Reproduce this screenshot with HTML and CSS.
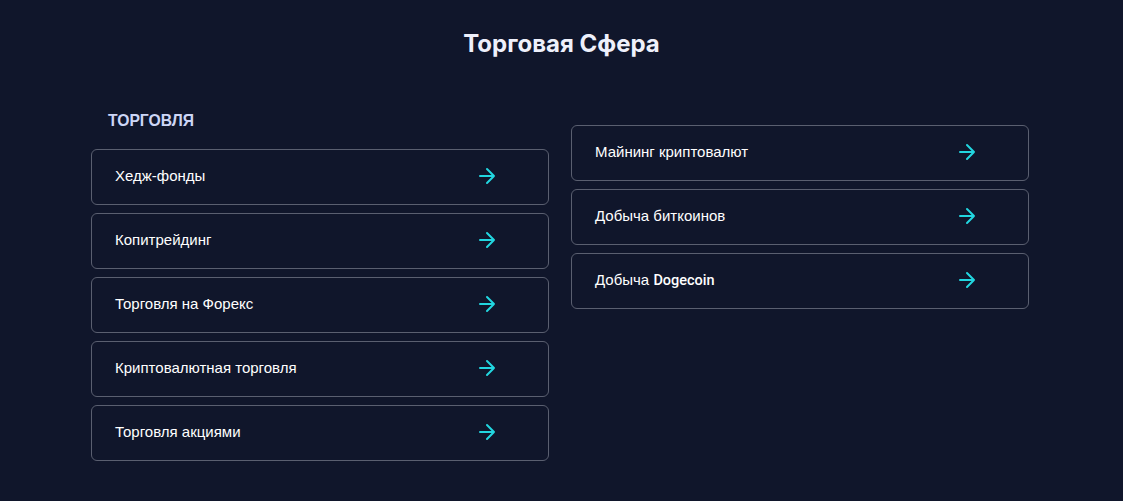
FILE: index.html
```html
<!DOCTYPE html>
<html lang="ru">
<head>
<meta charset="utf-8">
<link rel="stylesheet" href="styles.css">
</head>
<body>
<main class="page">
  <h1 class="title">Торговая Сфера</h1>
  <div class="columns">
    <section class="col">
      <h2 class="col-head">Торговля</h2>
      <ul class="list">
        <li class="card"><span class="label">Хедж-фонды</span><svg class="arrow" viewBox="0 0 24 24"><path d="M5 12h14M12 5l7 7-7 7"/></svg></li>
        <li class="card"><span class="label">Копитрейдинг</span><svg class="arrow" viewBox="0 0 24 24"><path d="M5 12h14M12 5l7 7-7 7"/></svg></li>
        <li class="card"><span class="label">Торговля на Форекс</span><svg class="arrow" viewBox="0 0 24 24"><path d="M5 12h14M12 5l7 7-7 7"/></svg></li>
        <li class="card"><span class="label">Криптовалютная торговля</span><svg class="arrow" viewBox="0 0 24 24"><path d="M5 12h14M12 5l7 7-7 7"/></svg></li>
        <li class="card"><span class="label">Торговля акциями</span><svg class="arrow" viewBox="0 0 24 24"><path d="M5 12h14M12 5l7 7-7 7"/></svg></li>
      </ul>
    </section>
    <section class="col col-right">
      <ul class="list">
        <li class="card"><span class="label">Майнинг криптовалют</span><svg class="arrow" viewBox="0 0 24 24"><path d="M5 12h14M12 5l7 7-7 7"/></svg></li>
        <li class="card"><span class="label">Добыча биткоинов</span><svg class="arrow" viewBox="0 0 24 24"><path d="M5 12h14M12 5l7 7-7 7"/></svg></li>
        <li class="card"><span class="label">Добыча <span class="latin">Dogecoin</span></span><svg class="arrow" viewBox="0 0 24 24"><path d="M5 12h14M12 5l7 7-7 7"/></svg></li>
      </ul>
    </section>
  </div>
</main>
</body>
</html>
```
FILE: styles.css
```css
html, body {
  margin: 0;
  padding: 0;
  background: #10162b;
}
body {
  font-family: "Liberation Sans", Arial, sans-serif;
  color: #ffffff;
}
.page {
  padding-top: 29px;
}
.title {
  margin: 0;
  text-align: center;
  font-family: Inter, "Liberation Sans", sans-serif;
  font-size: 24px;
  line-height: 30px;
  font-weight: 700;
  color: #eef0fb;
}
.columns {
  display: grid;
  grid-template-columns: 458px 458px;
  column-gap: 22px;
  justify-content: center;
  align-items: start;
  margin-top: 50px;
  padding-right: 3px;
}
.col-head {
  margin: 0 0 16px 17px;
  font-size: 15.7px;
  line-height: 24px;
  font-weight: 700;
  text-transform: uppercase;
  color: #cdd6f6;
}
.col-right {
  padding-top: 16px;
}
.list {
  list-style: none;
  margin: 0;
  padding: 0;
  display: flex;
  flex-direction: column;
  gap: 8px;
}
.card {
  height: 56px;
  box-sizing: border-box;
  border: 1px solid #5a5f70;
  border-radius: 6px;
  display: flex;
  align-items: center;
  justify-content: space-between;
  padding: 0 49px 2px 23px;
}
.label {
  font-size: 15px;
  line-height: 20px;
  color: #ffffff;
}
.latin {
  font-family: Roboto, "Liberation Sans", sans-serif;
  font-weight: 500;
  font-size: 14.5px;
}
.arrow {
  width: 24px;
  height: 24px;
  fill: none;
  stroke: #22d6e0;
  stroke-width: 2;
  stroke-linecap: round;
  stroke-linejoin: round;
}
```
